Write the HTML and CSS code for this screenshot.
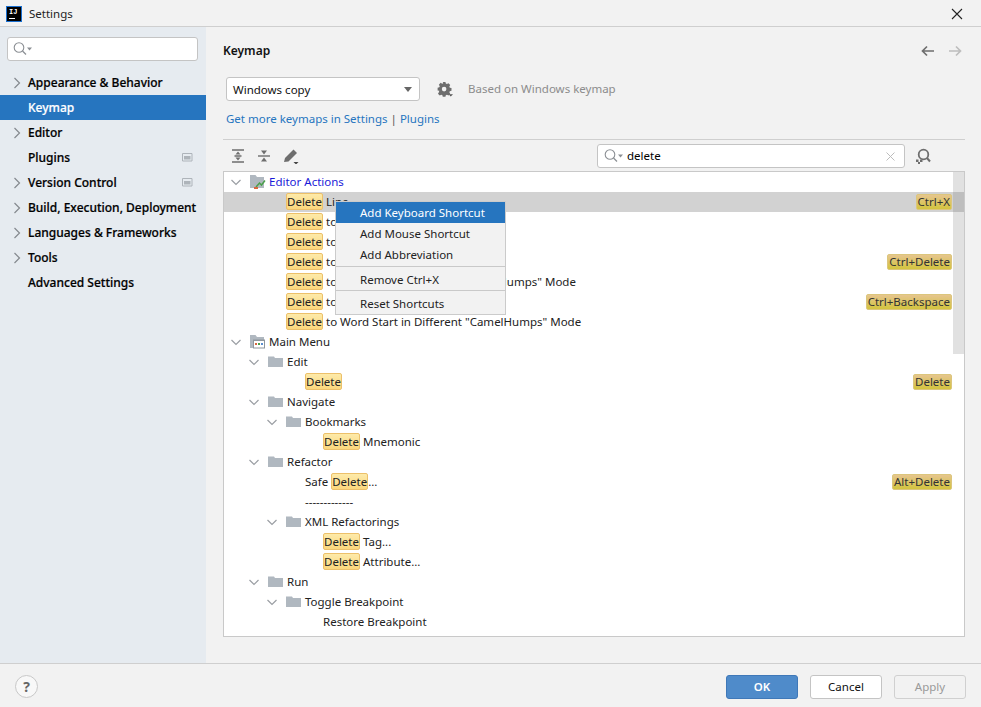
FILE: index.html
```html
<!DOCTYPE html>
<html lang="en">
<head>
<meta charset="utf-8">
<title>Settings</title>
<link rel="stylesheet" href="styles.css">
</head>
<body>
<svg class="defs" width="0" height="0" aria-hidden="true">
  <symbol id="chev-r" viewBox="0 0 14 14"><path d="M4.500 2 9.500 7 4.500 12" fill="none" stroke="#85898e" stroke-width="1.200"/></symbol>
  <symbol id="chev-d" viewBox="0 0 14 14"><path d="M2.500 5 7 9.500 11.500 5" fill="none" stroke="#9a9ea3" stroke-width="1.200"/></symbol>
  <symbol id="folder" viewBox="0 0 16 16"><path d="M0 2.500h6l1 1.500h8v9H0z" fill="#b0b8c0"/></symbol>
  <symbol id="search" viewBox="0 0 24 16"><circle cx="7" cy="6.500" r="4.800" fill="none" stroke="#8b8f94" stroke-width="1.100"/><path d="M10.500 10 14 13.500" stroke="#8b8f94" stroke-width="1.300"/><path d="M15 6.500h5l-2.500 3z" fill="#8b8f94"/></symbol>
  <symbol id="badge" viewBox="0 0 11 9"><path d="M.5.500h9.500v7.500H.5z" fill="none" stroke="#aeb4ba"/><path d="M2 3h6.500v3.500H2z" fill="#aeb4ba"/></symbol>
</svg>
<div class="window">
  <header class="titlebar">
    <div class="logo"><span class="logo-text">IJ</span><span class="logo-bar"></span></div>
    <span class="title">Settings</span>
    <svg class="close" width="12" height="12" viewBox="0 0 12 12"><path d="M1 1 11 11M11 1 1 11" stroke="#222" stroke-width="1.100"/></svg>
  </header>
  <div class="main">
    <aside class="sidebar">
      <div class="side-search"><svg width="24" height="16"><use href="#search"/></svg></div>
      <nav class="nav">
        <div class="nav-item"><svg class="nav-chev" width="14" height="14"><use href="#chev-r"/></svg>Appearance &amp; Behavior</div>
        <div class="nav-item selected"><span class="nav-chev"></span>Keymap</div>
        <div class="nav-item"><svg class="nav-chev" width="14" height="14"><use href="#chev-r"/></svg>Editor</div>
        <div class="nav-item"><span class="nav-chev"></span>Plugins<svg class="nav-badge" width="11" height="9"><use href="#badge"/></svg></div>
        <div class="nav-item"><svg class="nav-chev" width="14" height="14"><use href="#chev-r"/></svg>Version Control<svg class="nav-badge" width="11" height="9"><use href="#badge"/></svg></div>
        <div class="nav-item"><svg class="nav-chev" width="14" height="14"><use href="#chev-r"/></svg>Build, Execution, Deployment</div>
        <div class="nav-item"><svg class="nav-chev" width="14" height="14"><use href="#chev-r"/></svg>Languages &amp; Frameworks</div>
        <div class="nav-item"><svg class="nav-chev" width="14" height="14"><use href="#chev-r"/></svg>Tools</div>
        <div class="nav-item"><span class="nav-chev"></span>Advanced Settings</div>
      </nav>
    </aside>
    <section class="content">
      <div class="head">
        <h1 class="heading">Keymap</h1>
        <div class="history">
          <svg width="14" height="12" viewBox="0 0 14 12"><path d="M13 6H2M6 1.500 1.500 6 6 10.500" fill="none" stroke="#6e6e6e" stroke-width="1.700"/></svg>
          <svg width="14" height="12" viewBox="0 0 14 12"><path d="M1 6h11M8 1.500 12.500 6 8 10.500" fill="none" stroke="#bdbdbd" stroke-width="1.700"/></svg>
        </div>
      </div>
      <div class="scheme-row">
        <div class="combo"><span>Windows copy</span><i class="combo-arrow"></i></div>
        <svg class="gear" width="16" height="16" viewBox="0 0 18 18"><path fill="#6e6e6e" fill-rule="evenodd" d="M6.500 1h3l.4 1.900 1.300.6 1.700-1 2 2.100-1 1.600.5 1.300 1.900.5v3l-1.900.4-.5 1.300 1 1.700-2 2-1.700-1-1.300.5-.4 1.900h-3l-.4-1.900-1.300-.5-1.700 1-2-2 1-1.700L2.600 11 .7 10.600v-3L2.600 7.100l.5-1.300-1-1.600 2-2.100 1.700 1 1.300-.6zM8 6.500a2.600 2.600 0 1 0 0 5.200 2.600 2.600 0 0 0 0-5.200z"/><path d="M13 15h5l-2.500 2.500z" fill="#555"/></svg>
        <span class="based">Based on Windows keymap</span>
      </div>
      <div class="links"><a class="link">Get more keymaps in Settings</a> <span class="sep">|</span> <a class="link">Plugins</a></div>
      <hr class="rule">
      <div class="toolbar">
        <div class="tools">
          <svg width="14" height="14" viewBox="0 0 14 14"><path d="M1 1h12M1 13h12M3.500 7h7" stroke="#6e6e6e" stroke-width="1.400"/><path d="M7 2.500 4.500 5.500h5zM7 11.500l-2.500-3h5z" fill="#6e6e6e"/></svg>
          <svg width="14" height="14" viewBox="0 0 14 14"><path d="M1 7h12" stroke="#6e6e6e" stroke-width="1.400"/><path d="M7 5.500 4 1.500h6zM7 8.500 4 12.500h6z" fill="#6e6e6e"/></svg>
          <svg width="16" height="16" viewBox="0 0 16 16"><path d="M1 14 2 10 10.500 1.500l3.500 3.500L5.500 13.500z" fill="#6e6e6e"/><path d="M10.500 14h5L13 16.500z" fill="#444"/></svg>
        </div>
        <div class="filter">
          <div class="filter-box">
            <svg width="24" height="16"><use href="#search"/></svg>
            <span class="filter-text">delete</span>
            <svg class="clear" width="9" height="9" viewBox="0 0 9 9"><path d="M.5.500l8 8M8.500.500l-8 8" stroke="#bcbcbc" stroke-width="1"/></svg>
          </div>
          <svg class="find" width="16" height="16" viewBox="0 0 16 16"><circle cx="8.500" cy="6.500" r="4.800" fill="none" stroke="#6e6e6e" stroke-width="1.800"/><path d="M12 10l3 3.500" stroke="#6e6e6e" stroke-width="2"/><path d="M1 11.500h2.500v2.500H1zM5 11.500h2.500v2.500H5zM3 14h2v2H3z" fill="#6e6e6e"/></svg>
        </div>
      </div>
      <div class="tree">
        <div class="row d0"><svg class="tw" width="14" height="14"><use href="#chev-d"/></svg><svg class="ic" width="16" height="16" viewBox="0 0 16 16"><path d="M0 1h5.500l1.500 2h7v11H0z" fill="#b0b8c0"/><path d="M6 13l3.500-4 2 2L15 6.500" fill="none" stroke="#4a9f4a" stroke-width="1.500"/><path d="M4 13h4v2H4z" fill="#d9673e"/></svg><span class="link-blue">Editor Actions</span></div>
        <div class="row leaf d1 sel"><span><mark class="hit">Delete</mark> Line</span><mark class="key">Ctrl+X</mark></div>
        <div class="row leaf d1"><span><mark class="hit">Delete</mark> to Line End</span></div>
        <div class="row leaf d1"><span><mark class="hit">Delete</mark> to Line Start</span></div>
        <div class="row leaf d1"><span><mark class="hit">Delete</mark> to Word End</span><mark class="key">Ctrl+Delete</mark></div>
        <div class="row leaf d1"><span><mark class="hit">Delete</mark> to Word End in Different "CamelHumps" Mode</span></div>
        <div class="row leaf d1"><span><mark class="hit">Delete</mark> to Word Start</span><mark class="key">Ctrl+Backspace</mark></div>
        <div class="row leaf d1"><span><mark class="hit">Delete</mark> to Word Start in Different "CamelHumps" Mode</span></div>
        <div class="row d0"><svg class="tw" width="14" height="14"><use href="#chev-d"/></svg><svg class="ic" width="16" height="16" viewBox="0 0 16 16"><path d="M0 1h5.500l1.500 2h7v11H0z" fill="#b0b8c0"/><path d="M3 6h12v8.500H3z" fill="#fff"/><path d="M3 5.500h12v1.500H3zM3 6h1v8.500H3zM14 6h1v8.500h-1zM3 13.500h12v1H3z" fill="#8f979e"/><path d="M5 9h2v2H5z" fill="#d9673e"/><path d="M8 9h2v2H8z" fill="#4a9f4a"/><path d="M11 9h2v2h-2z" fill="#5a8fd0"/></svg><span>Main Menu</span></div>
        <div class="row d1"><svg class="tw" width="14" height="14"><use href="#chev-d"/></svg><svg class="ic" width="16" height="16"><use href="#folder"/></svg><span>Edit</span></div>
        <div class="row leaf d2"><span><mark class="hit">Delete</mark></span><mark class="key">Delete</mark></div>
        <div class="row d1"><svg class="tw" width="14" height="14"><use href="#chev-d"/></svg><svg class="ic" width="16" height="16"><use href="#folder"/></svg><span>Navigate</span></div>
        <div class="row d2"><svg class="tw" width="14" height="14"><use href="#chev-d"/></svg><svg class="ic" width="16" height="16"><use href="#folder"/></svg><span>Bookmarks</span></div>
        <div class="row leaf d3"><span><mark class="hit">Delete</mark> Mnemonic</span></div>
        <div class="row d1"><svg class="tw" width="14" height="14"><use href="#chev-d"/></svg><svg class="ic" width="16" height="16"><use href="#folder"/></svg><span>Refactor</span></div>
        <div class="row leaf d2"><span>Safe <mark class="hit">Delete</mark>...</span><mark class="key">Alt+Delete</mark></div>
        <div class="row leaf d2"><span>-------------</span></div>
        <div class="row d2"><svg class="tw" width="14" height="14"><use href="#chev-d"/></svg><svg class="ic" width="16" height="16"><use href="#folder"/></svg><span>XML Refactorings</span></div>
        <div class="row leaf d3"><span><mark class="hit">Delete</mark> Tag...</span></div>
        <div class="row leaf d3"><span><mark class="hit">Delete</mark> Attribute...</span></div>
        <div class="row d1"><svg class="tw" width="14" height="14"><use href="#chev-d"/></svg><svg class="ic" width="16" height="16"><use href="#folder"/></svg><span>Run</span></div>
        <div class="row d2"><svg class="tw" width="14" height="14"><use href="#chev-d"/></svg><svg class="ic" width="16" height="16"><use href="#folder"/></svg><span>Toggle Breakpoint</span></div>
        <div class="row leaf d3"><span>Restore Breakpoint</span></div>
        <div class="thumb"></div>
        <ul class="menu">
          <li class="menu-item active">Add Keyboard Shortcut</li>
          <li class="menu-item">Add Mouse Shortcut</li>
          <li class="menu-item">Add Abbreviation</li>
          <li class="menu-sep"></li>
          <li class="menu-item">Remove Ctrl+X</li>
          <li class="menu-sep second"></li>
          <li class="menu-item">Reset Shortcuts</li>
        </ul>
      </div>
    </section>
  </div>
  <footer class="footer">
    <div class="help">?</div>
    <div class="buttons">
      <button class="btn primary">OK</button>
      <button class="btn">Cancel</button>
      <button class="btn disabled">Apply</button>
    </div>
  </footer>
</div>
</body>
</html>
```

FILE: styles.css
```css
* { box-sizing: border-box; }
html, body { margin: 0; padding: 0; }
body { width: 981px; height: 707px; overflow: hidden; background: #f2f2f2; color: #111; font: 11.5px/20px "Noto Sans", "Open Sans", sans-serif; }
.defs { position: absolute; }
.window { display: flex; flex-direction: column; height: 707px; }

.titlebar { flex: none; height: 27px; display: flex; align-items: center; padding: 1px 18px 0 6px; border-bottom: 1px solid #cfcfcf; }
.logo { width: 16px; height: 16px; background: #000; border: 1px solid #1a6fd0; position: relative; margin-right: 7px; color: #fff; }
.logo-text { display: block; font: bold 7px/8px "Liberation Mono", monospace; padding: 1px 0 0 2px; }
.logo-bar { position: absolute; left: 2px; bottom: 2px; width: 6px; height: 1px; background: #fff; }
.title { color: #222; }
.close { margin-left: auto; }

.main { flex: 1; display: flex; min-height: 0; }
.sidebar { flex: none; width: 206px; background: #e6ebf0; padding-top: 10px; }
.side-search { margin: 0 8px 0 7px; height: 24px; background: #fff; border: 1px solid #c4c4c4; border-radius: 3px; padding: 3px 0 0 4px; }
.side-search svg { display: block; }
.nav { margin-top: 9px; }
.nav-item { height: 25px; display: flex; align-items: center; padding-left: 10px; font-size: 12px; font-weight: 500; color: #000; -webkit-text-stroke: .2px #000; }
.nav-chev { flex: none; width: 14px; height: 14px; margin-right: 4px; }
.nav-item.selected { background: #2675bf; color: #fff; -webkit-text-stroke: .2px #fff; }
.nav-badge { margin-left: auto; margin-right: 13px; }

.content { flex: 1; min-width: 0; padding: 0 16px 0 17px; display: flex; flex-direction: column; }
.head { height: 46px; padding-top: 2px; display: flex; align-items: center; justify-content: space-between; }
.heading { margin: 0; font-size: 12px; font-weight: 600; }
.history { display: flex; gap: 13px; margin-right: 3px; }
.scheme-row { display: flex; align-items: center; height: 24px; margin-left: 3px; margin-top: 4px; }
.combo { width: 194px; height: 24px; background: #fff; border: 1px solid #c4c4c4; border-radius: 3px; display: flex; align-items: center; justify-content: space-between; padding: 0 7px 0 6px; color: #111; }
.combo span { padding-top: 1px; }
.combo-arrow { width: 0; height: 0; border: 4px solid transparent; border-top: 5px solid #666; border-bottom: 0; }
.gear { margin-left: 17px; }
.based { margin-left: 15px; color: #8c8c8c; }
.links { margin: 8px 0 0 3px; height: 20px; color: #2675bf; }
.sep { color: #555; }
.rule { border: 0; border-top: 1px solid #cfcfcf; margin: 10px 0 0; width: 742px; }
.toolbar { height: 31px; padding: 1px 0 0 8px; display: flex; align-items: center; justify-content: space-between; }
.tools { display: flex; align-items: center; gap: 12px; }
.tools svg { display: block; }
.filter { display: flex; align-items: center; }
.filter-box { width: 308px; height: 24px; background: #fff; border: 1px solid #c4c4c4; border-radius: 3px; display: flex; align-items: center; padding: 0 9px 0 5px; }
.filter-text { margin-left: 0; color: #000; }
.clear { margin-left: auto; }
.find { margin: 0 34px 0 10px; }

.tree { position: relative; width: 742px; height: 466px; background: #fff; border: 1px solid #c9c9c9; overflow: hidden; }
.row { height: 20px; display: flex; align-items: center; white-space: pre; color: #222; padding-right: 12px; }
.row > span { flex: none; }
.d0 { padding-left: 5px; }
.d1 { padding-left: 23px; }
.d2 { padding-left: 41px; }
.d3 { padding-left: 59px; }
.leaf.d1 { padding-left: 62px; }
.leaf.d2 { padding-left: 81px; }
.leaf.d3 { padding-left: 99px; }
.tw { flex: none; margin-right: 7px; }
.ic { flex: none; margin-right: 3px; }
.link-blue { color: #1a1ad8; }
.sel { background: #d2d2d2; }
.hit { display: inline-block; height: 17px; line-height: 15px; padding: 0; background: linear-gradient(#fdeaa9, #fbd77d); border: 1px solid #ecc06a; border-radius: 2px; color: #222; }
.key { display: inline-block; margin-left: auto; height: 16px; line-height: 14px; padding: 0 1px; background: linear-gradient(#e6c58e, #d3c43e); border: 1px solid #dcc67c; border-radius: 2px; color: #333; }
.thumb { position: absolute; top: 0; right: 0; width: 11px; height: 182px; background: rgba(120,120,120,.22); }
.menu { position: absolute; left: 111px; top: 29px; width: 171px; margin: 0; padding: 0; list-style: none; background: #f2f2f2; border: 1px solid #cbcbcb; }
.menu-item { height: 21px; line-height: 21px; padding-left: 24px; color: #222; }
.menu-item.active { background: #2675bf; color: #fff; }
.menu-sep { height: 1px; background: #c9c9c9; margin: 1px 0 2px; }
.menu-sep.second { margin-top: 0; }

.footer { flex: none; height: 44px; padding: 2px 15px 0 15px; border-top: 1px solid #cfcfcf; display: flex; align-items: center; justify-content: space-between; }
.help { width: 23px; height: 23px; background: #f8f8f8; border: 1px solid #c8c8c8; border-radius: 50%; text-align: center; line-height: 21px; font-size: 14px; font-weight: 700; color: #666; }
.buttons { display: flex; gap: 12px; }
.btn { width: 72px; height: 24px; padding: 0; background: #fff; border: 1px solid #c4c4c4; border-radius: 3px; font: inherit; line-height: 20px; color: #111; }
.btn.primary { background: #4f8bca; border-color: #3f78b8; color: #fff; font-weight: 600; }
.btn.disabled { background: #f2f2f2; color: #999; border-color: #d0d0d0; }
```
